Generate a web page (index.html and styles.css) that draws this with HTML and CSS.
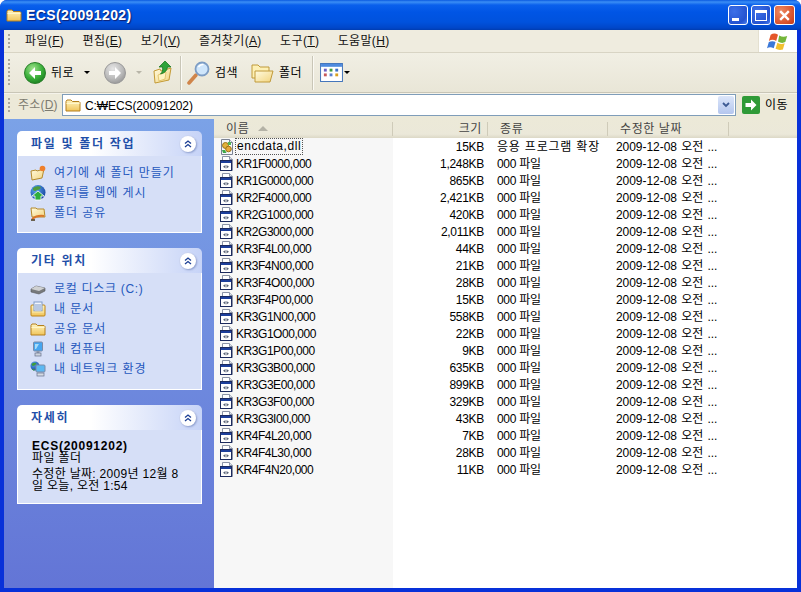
FILE: index.html
```html
<!DOCTYPE html>
<html lang="ko">
<head>
<meta charset="utf-8">
<title>ECS(20091202)</title>
<link rel="stylesheet" href="styles.css">
</head>
<body>
<svg class="defs" width="0" height="0" aria-hidden="true">
  <defs>
    <linearGradient id="gFolder" x1="0" y1="0" x2="0" y2="1"><stop offset="0" stop-color="#fff6c4"/><stop offset="1" stop-color="#f0c45a"/></linearGradient>
    <linearGradient id="gPale" x1="0" y1="0" x2="1" y2="1"><stop offset="0" stop-color="#fffbe0"/><stop offset="1" stop-color="#f2d47e"/></linearGradient>
    <radialGradient id="gGreen" cx=".4" cy=".3" r=".8"><stop offset="0" stop-color="#9fe28c"/><stop offset=".55" stop-color="#3bb03a"/><stop offset="1" stop-color="#14751b"/></radialGradient>
    <radialGradient id="gGray" cx=".4" cy=".3" r=".8"><stop offset="0" stop-color="#e6e6e6"/><stop offset=".6" stop-color="#b9b9b9"/><stop offset="1" stop-color="#8e8e8e"/></radialGradient>
    <radialGradient id="gGlobe" cx=".35" cy=".3" r=".8"><stop offset="0" stop-color="#58a4ee"/><stop offset="1" stop-color="#123f9c"/></radialGradient>
    <symbol id="folder" viewBox="0 0 16 16"><path d="M1 4.500 2 3h4l1.500 1.500H14l1 1V14H1z" fill="url(#gFolder)" stroke="#b47f1c"/><path d="M1.500 6.500h13" stroke="#fff6c9"/></symbol>
    <symbol id="file" viewBox="0 0 16 16"><path d="M3.500.5h7l3 3v11h-10z" fill="#fff" stroke="#8b93a6"/><path d="M10.500.5v3h3" fill="#dfe3ea" stroke="#8b93a6"/><rect x="1.500" y="4.500" width="11" height="10" fill="#fff" stroke="#1c2a5e"/><rect x="2" y="5" width="10" height="2" fill="#1d3f9c"/><path d="M6.500 9 4 10.800l2.500 1.700zM7.500 9 10 10.800l-2.500 1.700z" fill="#5a6478"/></symbol>
    <symbol id="dll" viewBox="0 0 16 16"><path d="M2.500.5h8l3 3v12h-11z" fill="#f5f7fb" stroke="#7b8394"/><path d="M10.500.5v3h3" fill="#dfe3ea" stroke="#7b8394"/><circle cx="6.500" cy="6.500" r="3" fill="#e2b13c" stroke="#9b7417"/><circle cx="9.500" cy="10" r="2.800" fill="#e8a93c" stroke="#9b7417"/><path d="M3 11h3l1.500 3H4z" fill="#3fa84a"/><path d="M9 3h3v3H9z" fill="#4fb455"/></symbol>
    <symbol id="chev" viewBox="0 0 8 8"><path d="M1 3.500 4 1l3 2.500M1 7l3-2.500L7 7" fill="none" stroke="#1c3f94" stroke-width="1.300"/></symbol>
  </defs>
</svg>

<div class="window">
  <header class="titlebar">
    <svg class="ico16" viewBox="0 0 16 16"><use href="#folder"/></svg>
    <span class="title">ECS(20091202)</span>
    <div class="caption">
      <span class="capbtn"><i class="cap-min"></i></span>
      <span class="capbtn"><i class="cap-max"></i></span>
      <span class="capbtn close"><svg viewBox="0 0 12 12" width="13" height="13"><path d="M2 2l8 8M10 2l-8 8" stroke="#fff" stroke-width="2.200"/></svg></span>
    </div>
  </header>

  <div class="frame">
    <nav class="menubar">
      <span class="grip"></span>
      <span class="menu">파일(<u>F</u>)</span>
      <span class="menu">편집(<u>E</u>)</span>
      <span class="menu">보기(<u>V</u>)</span>
      <span class="menu">즐겨찾기(<u>A</u>)</span>
      <span class="menu">도구(<u>T</u>)</span>
      <span class="menu">도움말(<u>H</u>)</span>
      <span class="flagbox">
        <svg viewBox="0 3 18 15" width="22" height="19"><path d="M3 5q3-2 6 0l-1.500 5q-3-2-6 0z" fill="#e4562a"/><path d="M10 5.500q3 2 6.500.5L15 11q-3 1.500-6-.5z" fill="#74b63a"/><path d="M1.500 11q3-1.500 5.500 0L5.500 16q-3-1.500-5.500 0z" fill="#3b78d8"/><path d="M8.500 11.500q3 2 6 .5l-1.500 5q-3 1-6-.5z" fill="#f1c02f"/></svg>
      </span>
    </nav>

    <div class="toolbar">
      <span class="grip tall"></span>
      <svg class="round back" viewBox="0 0 22 22"><circle cx="11" cy="11" r="10.500" fill="url(#gGreen)" stroke="#2a7f2a"/><path d="M11 5 5 11l6 6v-4h6V9h-6z" fill="#fff"/></svg>
      <span class="tlabel back-label">뒤로</span>
      <span class="drop d1"></span>
      <svg class="round fwd" viewBox="0 0 22 22"><circle cx="11" cy="11" r="10.500" fill="url(#gGray)" stroke="#999"/><path d="m11 5 6 6-6 6v-4H5V9h6z" fill="#fff"/></svg>
      <span class="drop d2"></span>
      <svg class="up" viewBox="0 0 20 24"><path d="M1 11l6-2 1 2 10-3-2 12L2 23z" fill="url(#gPale)" stroke="#c39a35"/><path d="M5 15l8-3-1 7-6 2z" fill="#fff4c0" stroke="#d9b655" stroke-width=".7"/><path d="M12 1 6 7h3.500c.5 3 0 5-2 7 4-1 6.500-3 7-7H18z" fill="#2ea33a" stroke="#1d7a22" stroke-width=".8"/></svg>
      <span class="sep s1"></span>
      <svg class="search" viewBox="0 0 26 24"><path d="M3 22l7-8" stroke="#d0854a" stroke-width="3.500" stroke-linecap="round"/><circle cx="16" cy="8" r="6.500" fill="#cfe6fb" stroke="#7d9dc4" stroke-width="1.800"/><path d="M12.500 6q2-3 5-2.500" stroke="#fff" stroke-width="1.500" fill="none"/></svg>
      <span class="tlabel search-label">검색</span>
      <svg class="folders" viewBox="0 0 23 22"><path d="M1 3h6l2 2h9v11H1z" fill="#fdf0b5" stroke="#c09a3a"/><path d="M4 9h18l-3 11H4z" fill="url(#gPale)" stroke="#c09a3a"/></svg>
      <span class="tlabel folder-label">폴더</span>
      <span class="sep s2"></span>
      <svg class="views" viewBox="0 0 24 20"><rect x=".5" y=".5" width="23" height="19" fill="#fff" stroke="#3c70b8"/><rect x="1" y="1" width="22" height="3" fill="#4d8ade"/><g><rect x="4" y="6" width="3" height="3" fill="#6d5fc0"/><rect x="10" y="6" width="3" height="3" fill="#3f9c3f"/><rect x="16" y="6" width="3" height="3" fill="#3c70c8"/><rect x="4" y="11" width="3" height="3" fill="#c65a5a"/><rect x="10" y="11" width="3" height="3" fill="#5a80d0"/><rect x="16" y="11" width="3" height="3" fill="#d9a020"/></g></svg>
      <span class="drop d3"></span>
    </div>

    <div class="addressbar">
      <span class="grip short"></span>
      <span class="addr-label">주소(<u>D</u>)</span>
      <div class="addr-input">
        <svg class="ico16" viewBox="0 0 16 16"><use href="#folder"/></svg>
        <span class="addr-text">C:₩ECS(20091202)</span>
        <span class="combo"><svg viewBox="0 0 8 6" width="8" height="6"><path d="M1 1l3 3 3-3" fill="none" stroke="#3d5a94" stroke-width="1.800"/></svg></span>
      </div>
      <svg class="go" viewBox="0 0 18 18"><rect width="18" height="18" rx="2" fill="#2f9a37"/><path d="M9 3.500 14.500 9 9 14.500V11H3.500V7H9z" fill="#fff"/></svg>
      <span class="go-label">이동</span>
    </div>

    <div class="content">
      <aside class="sidebar">
        <section class="panel">
          <h2 class="panel-head"><span>파일 및 폴더 작업</span><span class="chevron"><svg width="8" height="8"><use href="#chev"/></svg></span></h2>
          <div class="panel-body links first">
            <a class="link"><svg class="ico16" viewBox="0 0 16 16"><path d="M1 6l5-1 1 1 7-2-2 9-10 2z" fill="url(#gPale)" stroke="#b58a2c"/><circle cx="12.500" cy="3.500" r="2.800" fill="#ef7f2c"/></svg>여기에 새 폴더 만들기</a>
            <a class="link"><svg class="ico16" viewBox="0 0 16 16"><circle cx="8" cy="7.500" r="7.500" fill="url(#gGlobe)"/><path d="M3 3q4-3 8-1-1 3-4 3-2 2-4 0z" fill="#4f9c3c"/><path d="M8 6l6 5h-3v4H5v-4H2z" fill="#2fae3c" stroke="#fff" stroke-width=".8"/></svg>폴더를 웹에 게시</a>
            <a class="link"><svg class="ico16" viewBox="0 0 16 16"><path d="M1 3h5l1 1h7l1 8H2z" fill="url(#gPale)" stroke="#b58a2c"/><path d="M2 14q5-4 12-3" stroke="#d9772a" stroke-width="2" fill="none"/><path d="M1 15h4" stroke="#4a3a1a" stroke-width="1.500"/></svg>폴더 공유</a>
          </div>
        </section>
        <section class="panel">
          <h2 class="panel-head"><span>기타 위치</span><span class="chevron"><svg width="8" height="8"><use href="#chev"/></svg></span></h2>
          <div class="panel-body links second">
            <a class="link"><svg class="ico16" viewBox="0 0 16 16"><path d="M1 8l5-3 9 2v3l-6 3-8-2z" fill="#77797c" stroke="#55575a" stroke-width=".6"/><path d="M1 8l8 2 6-3-9-2z" fill="#cfd1d2"/></svg><span class="spaced">로컬 디스크 (C:)</span></a>
            <a class="link"><svg class="ico16" viewBox="0 0 16 16"><rect x="1" y="4" width="14" height="11" rx="1" fill="url(#gFolder)" stroke="#bf8415"/><rect x="4" y="1" width="8" height="9" fill="#f2f5fc" stroke="#7f9bc8"/><path d="M5 4h6M5 6h6M5 8h6" stroke="#7f9bc8"/><path d="M2 11h12" stroke="#fbe9a9"/></svg>내 문서</a>
            <a class="link"><svg class="ico16" viewBox="0 0 16 16"><use href="#folder"/></svg>공유 문서</a>
            <a class="link"><svg class="ico16" viewBox="0 0 16 16"><rect x="3.500" y="1" width="9" height="9" rx="1" fill="#46a6f0" stroke="#7c8aa6"/><path d="M5 3h4l-3 5H5z" fill="#a6dcfa"/><rect x="6.500" y="10" width="3" height="2" fill="#8f99ad"/><rect x="5" y="12" width="6" height="3" fill="#cdd3de" stroke="#66708a" stroke-width=".7"/></svg>내 컴퓨터</a>
            <a class="link"><svg class="ico16" viewBox="0 0 16 16"><circle cx="5" cy="5" r="4.500" fill="url(#gGlobe)"/><path d="M1.500 3q2-2 5-1-1 3-4 3z" fill="#3f9c3a"/><path d="M1 7q2 2 4 1l-1 2z" fill="#3f9c3a"/><rect x="6" y="4" width="9" height="7" rx="1" fill="#5cb8f2" stroke="#7c8aa6"/><rect x="7" y="12" width="7" height="3" fill="#d5dae4" stroke="#66708a" stroke-width=".7"/></svg>내 네트워크 환경</a>
          </div>
        </section>
        <section class="panel">
          <h2 class="panel-head"><span>자세히</span><span class="chevron"><svg width="8" height="8"><use href="#chev"/></svg></span></h2>
          <div class="panel-body details">
            <strong class="det-name">ECS(20091202)</strong>
            <span class="det-line">파일 폴더</span>
            <p class="det-para">수정한 날짜: 2009년 12월 8<br>일 오늘, 오전 1:54</p>
          </div>
        </section>
      </aside>

      <main class="list">
        <div class="row headrow">
          <span class="hd hd-name">이름<i class="sort"></i></span>
          <span class="hd hd-size">크기</span>
          <span class="hd hd-type">종류</span>
          <span class="hd hd-date">수정한 날짜</span>
        </div>
        <div class="row"><span class="name"><svg class="ico16" viewBox="0 0 16 16"><use href="#dll"/></svg><span class="focus">encdata,dll</span></span><span class="size">15KB</span><span class="type wide">응용 프로그램 확장</span><span class="date">2009-12-08 오전 ...</span></div>
        <div class="row"><span class="name"><svg class="ico16" viewBox="0 0 16 16"><use href="#file"/></svg><span class="fn">KR1F0000,000</span></span><span class="size">1,248KB</span><span class="type">000 파일</span><span class="date">2009-12-08 오전 ...</span></div>
        <div class="row"><span class="name"><svg class="ico16" viewBox="0 0 16 16"><use href="#file"/></svg><span class="fn">KR1G0000,000</span></span><span class="size">865KB</span><span class="type">000 파일</span><span class="date">2009-12-08 오전 ...</span></div>
        <div class="row"><span class="name"><svg class="ico16" viewBox="0 0 16 16"><use href="#file"/></svg><span class="fn">KR2F4000,000</span></span><span class="size">2,421KB</span><span class="type">000 파일</span><span class="date">2009-12-08 오전 ...</span></div>
        <div class="row"><span class="name"><svg class="ico16" viewBox="0 0 16 16"><use href="#file"/></svg><span class="fn">KR2G1000,000</span></span><span class="size">420KB</span><span class="type">000 파일</span><span class="date">2009-12-08 오전 ...</span></div>
        <div class="row"><span class="name"><svg class="ico16" viewBox="0 0 16 16"><use href="#file"/></svg><span class="fn">KR2G3000,000</span></span><span class="size">2,011KB</span><span class="type">000 파일</span><span class="date">2009-12-08 오전 ...</span></div>
        <div class="row"><span class="name"><svg class="ico16" viewBox="0 0 16 16"><use href="#file"/></svg><span class="fn">KR3F4L00,000</span></span><span class="size">44KB</span><span class="type">000 파일</span><span class="date">2009-12-08 오전 ...</span></div>
        <div class="row"><span class="name"><svg class="ico16" viewBox="0 0 16 16"><use href="#file"/></svg><span class="fn">KR3F4N00,000</span></span><span class="size">21KB</span><span class="type">000 파일</span><span class="date">2009-12-08 오전 ...</span></div>
        <div class="row"><span class="name"><svg class="ico16" viewBox="0 0 16 16"><use href="#file"/></svg><span class="fn">KR3F4O00,000</span></span><span class="size">28KB</span><span class="type">000 파일</span><span class="date">2009-12-08 오전 ...</span></div>
        <div class="row"><span class="name"><svg class="ico16" viewBox="0 0 16 16"><use href="#file"/></svg><span class="fn">KR3F4P00,000</span></span><span class="size">15KB</span><span class="type">000 파일</span><span class="date">2009-12-08 오전 ...</span></div>
        <div class="row"><span class="name"><svg class="ico16" viewBox="0 0 16 16"><use href="#file"/></svg><span class="fn">KR3G1N00,000</span></span><span class="size">558KB</span><span class="type">000 파일</span><span class="date">2009-12-08 오전 ...</span></div>
        <div class="row"><span class="name"><svg class="ico16" viewBox="0 0 16 16"><use href="#file"/></svg><span class="fn">KR3G1O00,000</span></span><span class="size">22KB</span><span class="type">000 파일</span><span class="date">2009-12-08 오전 ...</span></div>
        <div class="row"><span class="name"><svg class="ico16" viewBox="0 0 16 16"><use href="#file"/></svg><span class="fn">KR3G1P00,000</span></span><span class="size">9KB</span><span class="type">000 파일</span><span class="date">2009-12-08 오전 ...</span></div>
        <div class="row"><span class="name"><svg class="ico16" viewBox="0 0 16 16"><use href="#file"/></svg><span class="fn">KR3G3B00,000</span></span><span class="size">635KB</span><span class="type">000 파일</span><span class="date">2009-12-08 오전 ...</span></div>
        <div class="row"><span class="name"><svg class="ico16" viewBox="0 0 16 16"><use href="#file"/></svg><span class="fn">KR3G3E00,000</span></span><span class="size">899KB</span><span class="type">000 파일</span><span class="date">2009-12-08 오전 ...</span></div>
        <div class="row"><span class="name"><svg class="ico16" viewBox="0 0 16 16"><use href="#file"/></svg><span class="fn">KR3G3F00,000</span></span><span class="size">329KB</span><span class="type">000 파일</span><span class="date">2009-12-08 오전 ...</span></div>
        <div class="row"><span class="name"><svg class="ico16" viewBox="0 0 16 16"><use href="#file"/></svg><span class="fn">KR3G3I00,000</span></span><span class="size">43KB</span><span class="type">000 파일</span><span class="date">2009-12-08 오전 ...</span></div>
        <div class="row"><span class="name"><svg class="ico16" viewBox="0 0 16 16"><use href="#file"/></svg><span class="fn">KR4F4L20,000</span></span><span class="size">7KB</span><span class="type">000 파일</span><span class="date">2009-12-08 오전 ...</span></div>
        <div class="row"><span class="name"><svg class="ico16" viewBox="0 0 16 16"><use href="#file"/></svg><span class="fn">KR4F4L30,000</span></span><span class="size">28KB</span><span class="type">000 파일</span><span class="date">2009-12-08 오전 ...</span></div>
        <div class="row"><span class="name"><svg class="ico16" viewBox="0 0 16 16"><use href="#file"/></svg><span class="fn">KR4F4N20,000</span></span><span class="size">11KB</span><span class="type">000 파일</span><span class="date">2009-12-08 오전 ...</span></div>
      </main>
    </div>
  </div>
</div>
</body>
</html>
```

FILE: styles.css
```css
* { box-sizing: border-box; }
html, body { margin: 0; height: 100%; }
body {
  width: 801px;
  height: 592px;
  overflow: hidden;
  background: #fff;
  font: 12px/14px "Liberation Sans", "Noto Sans CJK KR", sans-serif;
  color: #000;
}
.defs { position: absolute; }
.ico16 { width: 16px; height: 16px; flex: none; }

.window {
  width: 801px;
  height: 592px;
  display: flex;
  flex-direction: column;
  background: #0831d9;
  border-radius: 7px 7px 0 0;
  overflow: hidden;
}

/* Title bar */
.titlebar {
  height: 30px;
  flex: none;
  display: flex;
  align-items: center;
  padding: 0 6px 0 6px;
  background: linear-gradient(180deg, #0a5ae0 0, #3b8ef5 2px, #0a60ec 5px, #0055e5 12px, #0052dd 22px, #0046c8 28px, #003cb0 30px);
}
.title {
  margin-left: 4px;
  color: #fff;
  font-weight: 700;
  font-size: 14px;
  letter-spacing: .4px;
  text-shadow: 1px 1px 1px #0f1f6e;
}
.caption { margin-left: auto; display: flex; gap: 3px; }
.capbtn {
  width: 20px;
  height: 20px;
  border: 1px solid #fff;
  border-radius: 3px;
  background: radial-gradient(circle at 30% 30%, #3d70e8, #2553d0 70%, #4a7ff0);
  display: flex;
  align-items: center;
  justify-content: center;
  position: relative;
}
.capbtn.close { width: 21px; background: radial-gradient(circle at 30% 30%, #ee8a62, #d8502a 70%, #c03a18); }
.cap-min { width: 7px; height: 3px; background: #fff; align-self: flex-end; margin: 0 6px 3px 0; }
.cap-max { width: 12px; height: 11px; border: 1px solid #fff; border-top-width: 3px; }

.frame {
  flex: 1;
  min-height: 0;
  margin: 0 4px 4px;
  display: flex;
  flex-direction: column;
  background: #ece9d8;
}

/* Menu */
.menubar {
  height: 23px;
  flex: none;
  display: flex;
  align-items: center;
  padding-left: 4px;
  gap: 18.4px;
  border-bottom: 1px solid #d8d4c4;
  background: #efecdf;
  position: relative;
  font-size: 12px;
  color: #111;
}
.menu { letter-spacing: .35px; white-space: nowrap; }
.grip {
  width: 2px;
  height: 14px;
  background: repeating-linear-gradient(180deg, #aaa69a 0 2px, transparent 2px 4px);
  flex: none;
}
.menubar .grip { margin-right: -3.4px; }
.grip.tall { height: 28px; position: absolute; left: 4px; top: 6px; }
.grip.short { height: 14px; margin-right: 8px; }
.flagbox {
  margin-left: auto;
  width: 39px;
  height: 22px;
  background: #fff;
  display: flex;
  align-items: center;
  justify-content: center;
  border-left: 1px solid #e4e0d0;
}

/* Toolbar: icons are placed on the bar like a free strip of controls */
.toolbar {
  height: 40px;
  flex: none;
  position: relative;
  background: linear-gradient(180deg, #f1efe4, #e9e6d7);
  border-bottom: 1px solid #c9c6b7;
}
.toolbar > * { position: absolute; }
.round { width: 22px; height: 22px; top: 9px; }
.back { left: 20px; }
.fwd { left: 100px; }
.tlabel { top: 13px; font-size: 12px; letter-spacing: .4px; }
.back-label { left: 47px; }
.search-label { left: 211px; }
.folder-label { left: 275px; }
.drop { width: 0; height: 0; border: 3px solid transparent; border-top: 3px solid #000; border-bottom: 0; top: 18px; }
.d1 { left: 80px; }
.d2 { left: 132px; border-top-color: #b8b5a8; }
.d3 { left: 340px; }
.up { left: 149px; top: 7px; width: 20px; height: 24px; }
.sep { width: 1px; height: 34px; top: 3px; background: #c9c6b7; box-shadow: 1px 0 0 #fbfaf4; }
.s1 { left: 176px; }
.s2 { left: 308px; }
.search { left: 182px; top: 8px; width: 26px; height: 24px; }
.folders { left: 247px; top: 9px; width: 23px; height: 22px; }
.views { left: 316px; top: 10px; width: 23px; height: 19px; }

/* Address */
.addressbar {
  height: 26px;
  flex: none;
  display: flex;
  align-items: flex-start;
  padding: 0 0 0 4px;
  background: #ece9d8;
  border-top: 1px solid #f5f3ea;
}
.addressbar .grip { margin-top: 4px; }
.addr-label { color: #7d7b70; font-size: 12px; width: 44px; margin-top: 4px; white-space: nowrap; letter-spacing: .2px; }
.addr-input {
  width: 674px;
  height: 22px;
  display: flex;
  align-items: center;
  gap: 4px;
  padding: 0 1px 0 2px;
  background: #fff;
  border: 1px solid #7f9db9;
}
.addr-text { font-size: 12px; letter-spacing: -.1px; margin-top: 1px; }
.combo {
  margin-left: auto;
  width: 16px;
  height: 18px;
  background: linear-gradient(180deg, #dce6fa, #b4c6ee);
  border-radius: 2px;
  display: flex;
  align-items: center;
  justify-content: center;
}
.go { width: 18px; height: 18px; margin: 2px 0 0 6px; flex: none; }
.go-label { margin: 4px 0 0 5px; font-size: 12px; letter-spacing: .4px; }

/* Main area */
.content { flex: 1; min-height: 0; display: flex; }
.sidebar {
  width: 210px;
  flex: none;
  padding: 12px 12px 0 13px;
  background: linear-gradient(180deg, #7ba2e7, #6375d6);
  display: flex;
  flex-direction: column;
  gap: 15px;
}
.panel-head {
  margin: 0;
  height: 25px;
  display: flex;
  align-items: center;
  justify-content: space-between;
  padding: 0 6px 0 14px;
  border-radius: 5px 5px 0 0;
  background: linear-gradient(90deg, #fff 40%, #c6d3f7);
  color: #1f4fa8;
  font-size: 12px;
  font-weight: 700;
  letter-spacing: 1.7px;
}
.chevron {
  width: 16px;
  height: 16px;
  border-radius: 50%;
  background: #fff;
  box-shadow: 1px 1px 2px #8b9ccd, 0 0 0 1px #cfd8f2;
  display: flex;
  align-items: center;
  justify-content: center;
}
.panel-body {
  background: #d6dff7;
  border: 1px solid #fff;
  border-top: 0;
}
.links { display: flex; flex-direction: column; padding: 0 0 0 12px; }
.links.first { padding-top: 7px; height: 77px; }
.links.second { padding-top: 6px; height: 117px; }
.link {
  height: 20px;
  display: flex;
  align-items: center;
  gap: 8px;
  color: #2558bd;
  letter-spacing: .95px;
  white-space: nowrap;
}
.spaced { letter-spacing: .7px; }
.details { height: 74px; padding: 10px 12px 0 14px; display: flex; flex-direction: column; }
.det-name { font-size: 12px; line-height: 12px; letter-spacing: .75px; }
.det-line { line-height: 12px; letter-spacing: .4px; }
.det-para { margin: 4px 0 0; line-height: 12px; letter-spacing: .3px; white-space: nowrap; }

/* File list */
.list {
  flex: 1;
  min-width: 0;
  background: linear-gradient(90deg, #f7f7f7 179px, #fff 179px);
}
.row {
  display: grid;
  grid-template-columns: 179px 95px 120px 120px;
  height: 17px;
  align-items: center;
  white-space: nowrap;
}
.headrow {
  height: 19px;
  background: linear-gradient(180deg, #ece9d8, #ebe8d9 80%, #dcd8c6);
  color: #444;
  position: relative;
  letter-spacing: .6px;
}
.headrow::after {
  content: "";
  position: absolute;
  left: 514px;
  top: 3px;
  width: 1px;
  height: 14px;
  background: #cfcbb9;
}
.hd { height: 14px; border-right: 1px solid #cfcbb9; }
.hd-name { padding-left: 12px; display: flex; align-items: center; }
.hd-size { text-align: right; padding-right: 5px; }
.hd-type { padding-left: 12px; }
.hd-date { padding-left: 12px; border-right: 0; }
.sort {
  margin-left: 9px;
  width: 0;
  height: 0;
  border: 5px solid transparent;
  border-top: 0;
  border-bottom: 5px solid #b4b2a6;
}
.name { display: flex; align-items: center; padding-left: 5px; gap: 1px; }
.fn { letter-spacing: -.45px; }
.focus { outline: 1px dotted #555; padding: 0 1px; letter-spacing: .55px; line-height: 15px; }
.size { text-align: right; padding-right: 4px; letter-spacing: -.3px; }
.type { padding-left: 9px; letter-spacing: -.3px; }
.type.wide { letter-spacing: .8px; }
.date { padding-left: 8px; letter-spacing: -.05px; word-spacing: 1px; }
```
